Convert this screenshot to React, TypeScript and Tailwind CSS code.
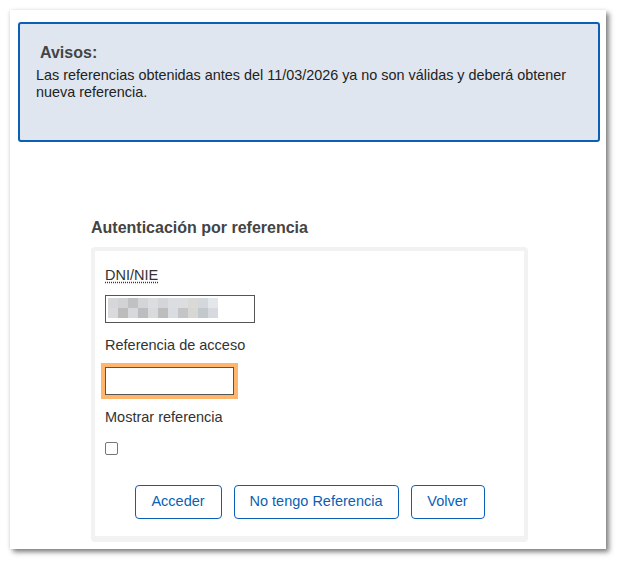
import React from "react";

const row1 = ["#d5d7da", "#d0d2d3", "#c0c1c3", "#d4d5d7", "#dcdde0", "#d4d5d8", "#dcdde0", "#dcdde0", "#d9d9d6", "#d4d7dc", "#e4e7ea"];
const row2 = ["#d8dadc", "#bcbcbc", "#d6d8db", "#bcbdbe", "#d9dadc", "#bcbdbc", "#d9dce0", "#c4c5c7", "#d7d8d6", "#c3c8cd", "#d6dadf"];

function Mosaic() {
  return (
    <div className="flex flex-col">
      {[row1, row2].map((r, i) => (
        <div key={i} className="flex">
          {r.map((c, j) => (
            <div key={j} className="w-[10px] h-[10px]" style={{ backgroundColor: c }} />
          ))}
        </div>
      ))}
    </div>
  );
}

export default function App() {
  return (
    <div
      className="w-[618px] h-[561px] bg-white pt-[10px] pl-[10px] text-[#333]"
      style={{ fontFamily: '"Liberation Sans", Arial, sans-serif' }}
    >
      <div className="w-[596px] h-[539px] bg-white shadow-[3px_3px_5px_rgba(0,0,0,0.5),-1px_0_3px_rgba(0,0,0,0.08)] pt-[12px] pl-[8px]">
        <div className="w-[582px] h-[120px] border-2 border-[#0b5fb5] rounded-[3px] bg-[#dfe6ef] px-[16px] pt-[19px]">
          <div className="ml-[4px] text-[16px] leading-[20px] font-bold text-[#444]">Avisos:</div>
          <p className="mt-[4px] text-[14.4px] leading-[17px] text-[#222]">
            Las referencias obtenidas antes del 11/03/2026 ya no son válidas y deberá obtener nueva referencia.
          </p>
        </div>

        <div className="ml-[73px] mt-[76px] w-[437px]">
          <h2 className="text-[16px] leading-[20px] font-bold text-[#444]">Autenticación por referencia</h2>
          <div className="mt-[9px] border-[4px] border-b-[6px] border-[#f2f2f2] rounded-[4px] bg-white pl-[10px] pr-[10px] pt-[14px] pb-[17px] flex flex-col">
            <div className="text-[14.5px] leading-[20px] text-[#333]">
              <abbr title="Documento Nacional de Identidad / Número de Identidad de Extranjero" className="underline decoration-dotted underline-offset-2">
                DNI/NIE
              </abbr>
            </div>
            <div className="mt-[10px] w-[150px] h-[28px] border border-[#555] bg-white pl-[2px] pt-[2px]">
              <Mosaic />
            </div>
            <div className="mt-[12px] text-[14.5px] leading-[20px]">Referencia de acceso</div>
            <div className="mt-[12px] w-[129px] h-[28px] border border-[#555] bg-white outline-[4px] outline-solid outline-offset-[0px] outline-[#ffb56b]" />
            <div className="mt-[12px] text-[14.5px] leading-[20px]">Mostrar referencia</div>
            <div className="mt-[15px] w-[13px] h-[13px] border border-[#767676] rounded-[2px] bg-white" />
            <div className="mt-[30px] flex justify-center gap-[12px]">
              <button className="w-[87px] h-[34px] border border-[#0b5fb5] rounded-[4px] text-[14.5px] text-[#0b5fb5] bg-white">
                Acceder
              </button>
              <button className="w-[165px] h-[34px] border border-[#0b5fb5] rounded-[4px] text-[14.5px] text-[#0b5fb5] bg-white">
                No tengo Referencia
              </button>
              <button className="w-[74px] h-[34px] border border-[#0b5fb5] rounded-[4px] text-[14.5px] text-[#0b5fb5] bg-white">
                Volver
              </button>
            </div>
          </div>
        </div>
      </div>
    </div>
  );
}
